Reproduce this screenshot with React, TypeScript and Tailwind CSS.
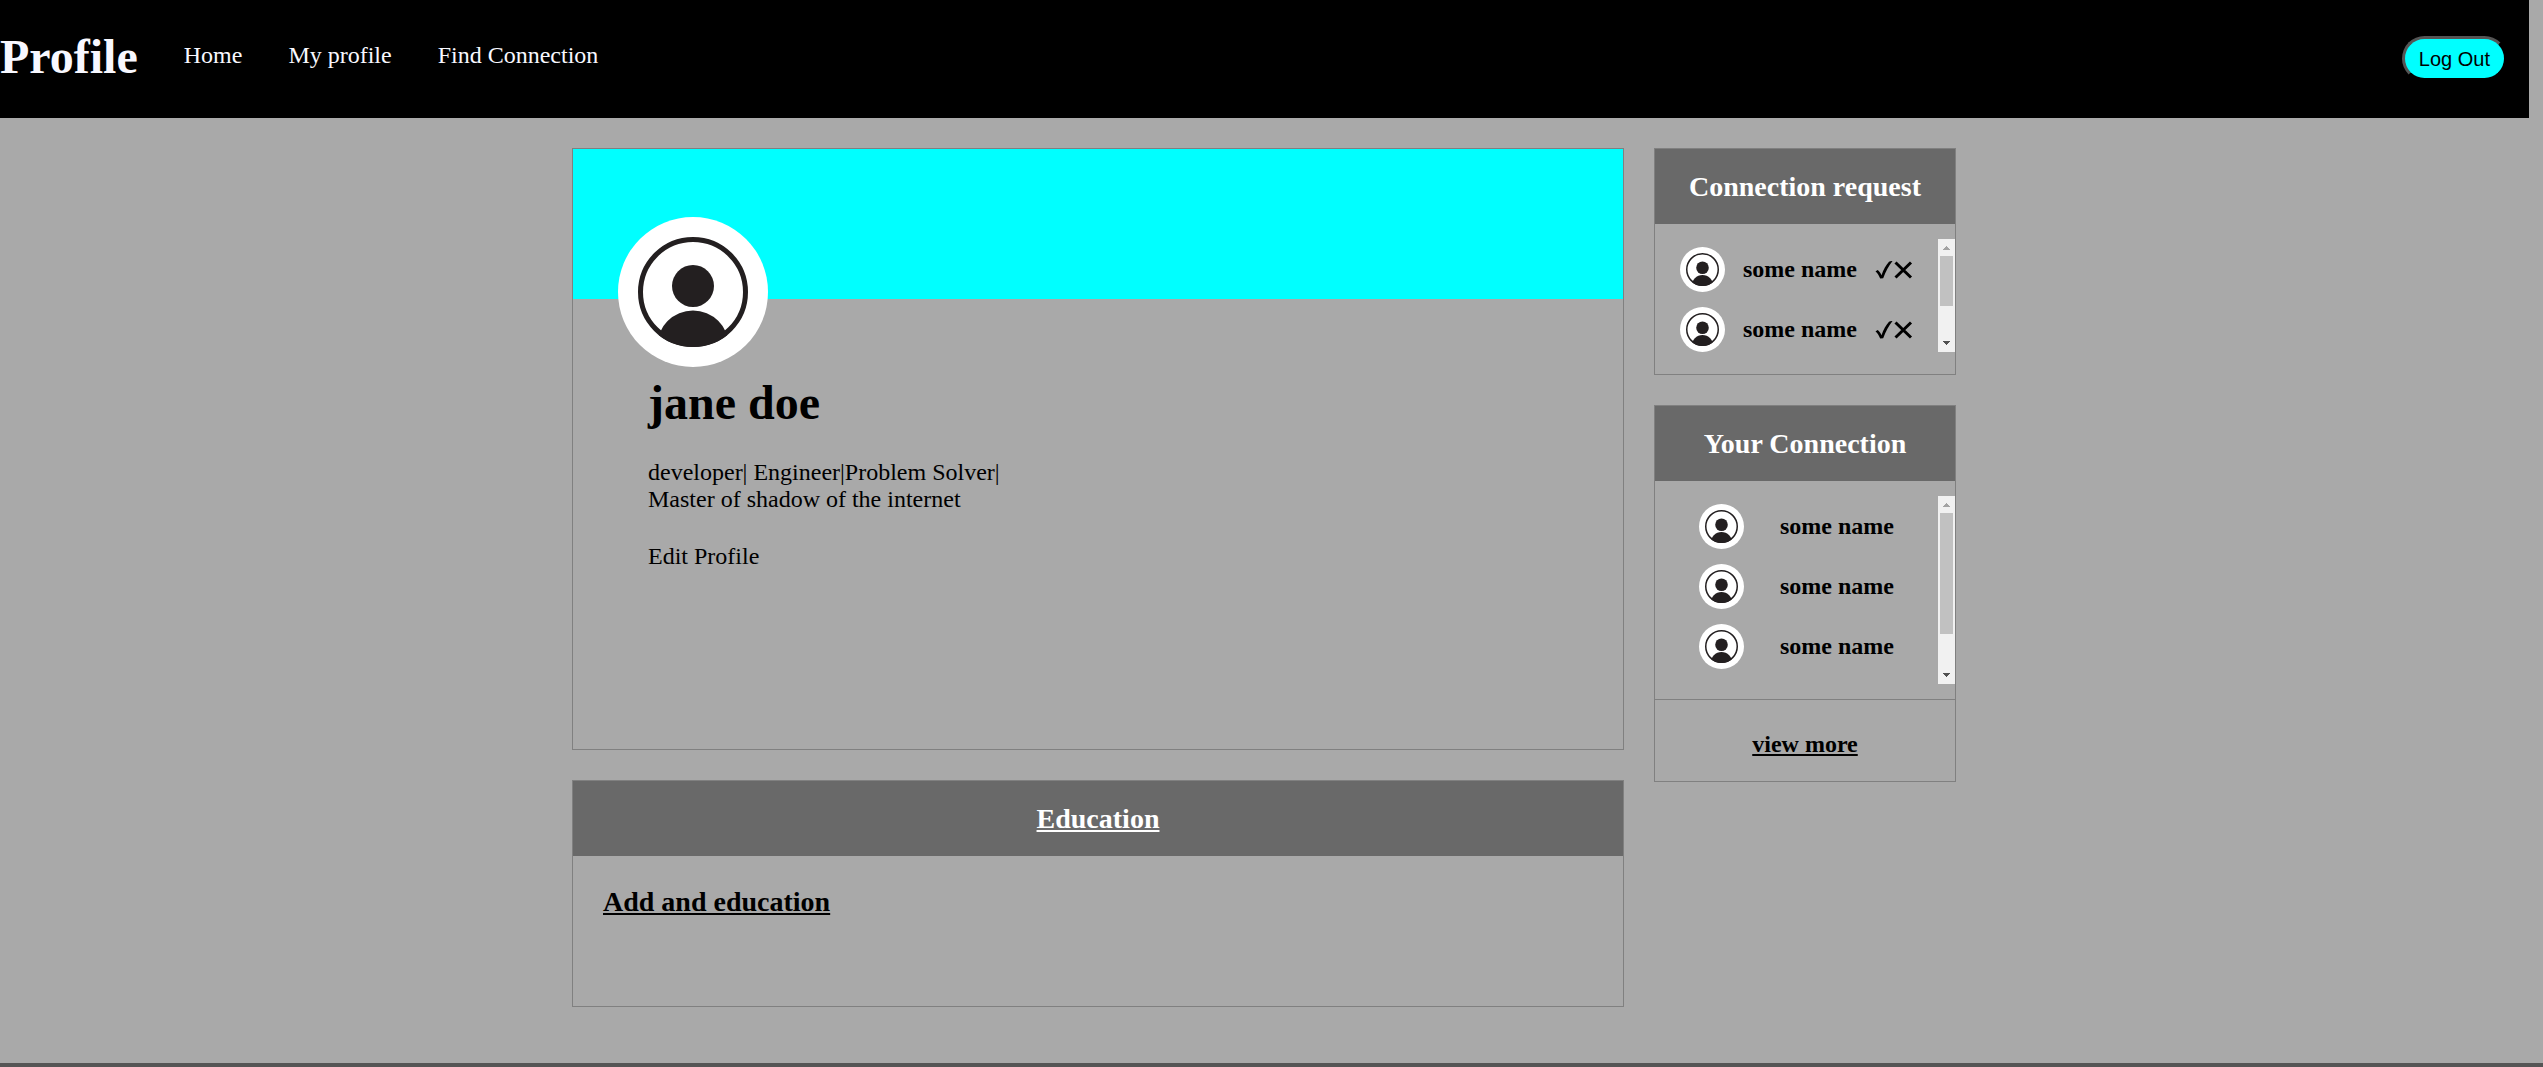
import type { ReactNode } from "react";

const navLinks = ["Home", "My profile", "Find Connection"];
const requests = ["some name", "some name"];
const connections = ["some name", "some name", "some name"];

function Avatar({ id, className }: { id: string; className: string }) {
  return (
    <svg viewBox="0 0 150 150" className={`shrink-0 ${className}`} role="img" aria-label="Avatar">
      <clipPath id={id}>
        <circle cx="75" cy="75" r="55" />
      </clipPath>
      <circle cx="75" cy="75" r="75" fill="#fff" />
      <circle cx="75" cy="75" r="52.5" fill="none" stroke="#231f20" strokeWidth="5" />
      <circle cx="75" cy="69" r="21" fill="#231f20" />
      <circle cx="75" cy="129.5" r="36" fill="#231f20" clipPath={`url(#${id})`} />
    </svg>
  );
}

function ScrollBar({ thumb }: { thumb: string }) {
  return (
    <div className="flex w-[17px] shrink-0 flex-col items-center bg-[#f1f1f1]">
      <svg className="h-[17px] w-[17px] shrink-0" viewBox="0 0 17 17" shapeRendering="crispEdges">
        <path d="M8 7h1v1h1v1h1v1h1v1H5v-1h1V9h1V8h1z" fill="#a3a3a3" />
      </svg>
      <div className={`w-[13px] bg-[#c1c1c1] ${thumb}`} />
      <svg className="mt-auto h-[17px] w-[17px] shrink-0" viewBox="0 0 17 17" shapeRendering="crispEdges">
        <path d="M5 6h7v1h-1v1h-1v1H9v1H8V9H7V8H6V7H5z" fill="#505050" />
      </svg>
    </div>
  );
}

function CardTitle({ children }: { children: ReactNode }) {
  return (
    <h3 className="flex h-[75px] items-center justify-center bg-[#696969] text-[28px] leading-8 font-bold text-white">
      {children}
    </h3>
  );
}

export default function App() {
  return (
    <div className="flex min-h-screen flex-col bg-[#a9a9a9] font-['Liberation_Serif',serif] text-2xl leading-[27px] text-black">
      <div className="flex-1 pr-[14px] pb-14">
        <header className="flex items-start bg-black pt-[29px] pr-[22px] pb-[34px] text-[#f8f8ff]">
          <h1 className="text-5xl leading-[55px] font-bold">Profile</h1>
          <nav className="ml-[46px] flex gap-[46px] pt-[13px]">
            {navLinks.map((link) => (
              <a key={link} href="#">
                {link}
              </a>
            ))}
          </nav>
          <button
            type="button"
            className="mt-[7px] ml-auto h-[45px] rounded-full border-3 border-t-[#555] border-r-black border-b-black border-l-[#555] bg-[#00ffff] px-[14px] font-['Liberation_Sans',sans-serif] text-xl leading-6 text-black"
          >
            Log Out
          </button>
        </header>

        <div className="mt-[30px] flex items-start justify-center gap-[30px] pr-px">
          <main className="flex w-full max-w-[1052px] flex-col gap-[30px]">
            <section className="min-h-[602px] border border-[#808080]">
              <div className="h-[150px] bg-[#00ffff]" />
              <Avatar id="avatar-main" className="relative -mt-[82px] ml-[45px] size-[150px]" />
              <div className="pt-2 pl-[75px]">
                <h1 className="text-5xl leading-[55px] font-bold">jane doe</h1>
                <p className="mt-[29px]">
                  developer| Engineer|Problem Solver|
                  <br />
                  Master of shadow of the internet
                </p>
                <a href="#" className="mt-[30px] inline-block">
                  Edit Profile
                </a>
              </div>
            </section>

            <section className="min-h-[227px] border border-[#808080]">
              <CardTitle>
                <span className="underline">Education</span>
              </CardTitle>
              <h3 className="px-[30px] pt-[30px] text-[28px] leading-8 font-bold">
                <a href="#" className="underline">
                  Add and education
                </a>
              </h3>
            </section>
          </main>

          <aside className="flex w-[302px] shrink-0 flex-col gap-[30px]">
            <section className="border border-[#808080] pb-[22px]">
              <CardTitle>Connection request</CardTitle>
              <div className="mt-[15px] flex">
                <ul className="flex flex-1 flex-col gap-[15px] pt-2">
                  {requests.map((name, i) => (
                    <li key={i} className="flex items-center justify-center gap-[18px]">
                      <Avatar id={`avatar-request-${i}`} className="size-[45px]" />
                      <span className="font-bold">{name}</span>
                      <span className="flex">
                        <button type="button" aria-label="Accept">
                          <svg className="h-5 w-[18px]" viewBox="0 0 18 20">
                            <path
                              d="M0.5 11.5L2.5 10C4 10.8 5.300 12.500 6.500 15.200C8.500 9.500 11 5 14 1.800C15 1.100 16 0.900 17.500 1C13.800 5.500 10.800 11.500 8.200 18.300L5.200 18.600C4 15.500 2.500 13 0.500 11.500Z"
                              fill="#000"
                            />
                          </svg>
                        </button>
                        <button type="button" aria-label="Decline">
                          <svg className="h-5 w-5" viewBox="0 0 20 20">
                            <path d="M2.500 2.500L18 17.500M18 2.500L2.500 17.500" stroke="#000" strokeWidth="3" />
                          </svg>
                        </button>
                      </span>
                    </li>
                  ))}
                </ul>
                <ScrollBar thumb="h-[50px]" />
              </div>
            </section>

            <section className="border border-[#808080]">
              <CardTitle>Your Connection</CardTitle>
              <div className="my-[15px] flex">
                <ul className="flex flex-1 flex-col gap-[15px] pt-2 pb-[15px]">
                  {connections.map((name, i) => (
                    <li key={i} className="flex items-center justify-center gap-9">
                      <Avatar id={`avatar-connection-${i}`} className="size-[45px]" />
                      <span className="font-bold">{name}</span>
                    </li>
                  ))}
                </ul>
                <ScrollBar thumb="h-[121px]" />
              </div>
              <div className="border-t border-[#808080] pt-[31px] pb-[23px] text-center">
                <a href="#" className="font-bold underline">
                  view more
                </a>
              </div>
            </section>
          </aside>
        </div>
      </div>
      <footer className="h-1 bg-[#555]" />
    </div>
  );
}
